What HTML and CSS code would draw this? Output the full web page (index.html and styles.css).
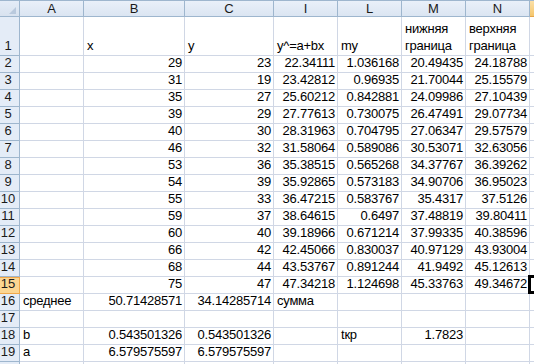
FILE: index.html
```html
<!DOCTYPE html>
<html>
<head>
<meta charset="utf-8">
<link rel="stylesheet" href="styles.css">
</head>
<body>
<div class="sheet">
  <div class="ch corner"><span class="tri"></span></div>
  <div class="ch">A</div><div class="ch">B</div><div class="ch">C</div><div class="ch">I</div><div class="ch">L</div><div class="ch">M</div><div class="ch">N</div><div class="ch sel-col"></div>

  <div class="rh">1</div>
  <div class="c"></div><div class="c">x</div><div class="c">y</div><div class="c">y^=a+bx</div><div class="c">my</div><div class="c wrap">нижняя граница</div><div class="c wrap">верхняя граница</div><div class="c"></div>

  <div class="rh">2</div>
  <div class="c"></div><div class="c n">29</div><div class="c n">23</div><div class="c n">22.34111</div><div class="c n">1.036168</div><div class="c n">20.49435</div><div class="c n">24.18788</div><div class="c"></div>

  <div class="rh">3</div>
  <div class="c"></div><div class="c n">31</div><div class="c n">19</div><div class="c n">23.42812</div><div class="c n">0.96935</div><div class="c n">21.70044</div><div class="c n">25.15579</div><div class="c"></div>

  <div class="rh">4</div>
  <div class="c"></div><div class="c n">35</div><div class="c n">27</div><div class="c n">25.60212</div><div class="c n">0.842881</div><div class="c n">24.09986</div><div class="c n">27.10439</div><div class="c"></div>

  <div class="rh">5</div>
  <div class="c"></div><div class="c n">39</div><div class="c n">29</div><div class="c n">27.77613</div><div class="c n">0.730075</div><div class="c n">26.47491</div><div class="c n">29.07734</div><div class="c"></div>

  <div class="rh">6</div>
  <div class="c"></div><div class="c n">40</div><div class="c n">30</div><div class="c n">28.31963</div><div class="c n">0.704795</div><div class="c n">27.06347</div><div class="c n">29.57579</div><div class="c"></div>

  <div class="rh">7</div>
  <div class="c"></div><div class="c n">46</div><div class="c n">32</div><div class="c n">31.58064</div><div class="c n">0.589086</div><div class="c n">30.53071</div><div class="c n">32.63056</div><div class="c"></div>

  <div class="rh">8</div>
  <div class="c"></div><div class="c n">53</div><div class="c n">36</div><div class="c n">35.38515</div><div class="c n">0.565268</div><div class="c n">34.37767</div><div class="c n">36.39262</div><div class="c"></div>

  <div class="rh">9</div>
  <div class="c"></div><div class="c n">54</div><div class="c n">39</div><div class="c n">35.92865</div><div class="c n">0.573183</div><div class="c n">34.90706</div><div class="c n">36.95023</div><div class="c"></div>

  <div class="rh">10</div>
  <div class="c"></div><div class="c n">55</div><div class="c n">33</div><div class="c n">36.47215</div><div class="c n">0.583767</div><div class="c n">35.4317</div><div class="c n">37.5126</div><div class="c"></div>

  <div class="rh">11</div>
  <div class="c"></div><div class="c n">59</div><div class="c n">37</div><div class="c n">38.64615</div><div class="c n">0.6497</div><div class="c n">37.48819</div><div class="c n">39.80411</div><div class="c"></div>

  <div class="rh">12</div>
  <div class="c"></div><div class="c n">60</div><div class="c n">40</div><div class="c n">39.18966</div><div class="c n">0.671214</div><div class="c n">37.99335</div><div class="c n">40.38596</div><div class="c"></div>

  <div class="rh">13</div>
  <div class="c"></div><div class="c n">66</div><div class="c n">42</div><div class="c n">42.45066</div><div class="c n">0.830037</div><div class="c n">40.97129</div><div class="c n">43.93004</div><div class="c"></div>

  <div class="rh">14</div>
  <div class="c"></div><div class="c n">68</div><div class="c n">44</div><div class="c n">43.53767</div><div class="c n">0.891244</div><div class="c n">41.9492</div><div class="c n">45.12613</div><div class="c"></div>

  <div class="rh sel-row">15</div>
  <div class="c"></div><div class="c n">75</div><div class="c n">47</div><div class="c n">47.34218</div><div class="c n">1.124698</div><div class="c n">45.33763</div><div class="c n">49.34672</div><div class="c"></div>

  <div class="rh">16</div>
  <div class="c">среднее</div><div class="c n">50.71428571</div><div class="c n">34.14285714</div><div class="c">сумма</div><div class="c"></div><div class="c"></div><div class="c"></div><div class="c"></div>

  <div class="rh">17</div>
  <div class="c"></div><div class="c"></div><div class="c"></div><div class="c"></div><div class="c"></div><div class="c"></div><div class="c"></div><div class="c"></div>

  <div class="rh">18</div>
  <div class="c">b</div><div class="c n">0.543501326</div><div class="c n">0.543501326</div><div class="c"></div><div class="c">tкр</div><div class="c n">1.7823</div><div class="c"></div><div class="c"></div>

  <div class="rh">19</div>
  <div class="c">a</div><div class="c n">6.579575597</div><div class="c n">6.579575597</div><div class="c"></div><div class="c"></div><div class="c"></div><div class="c"></div><div class="c"></div>

  <div class="rh"></div>
  <div class="c"></div><div class="c"></div><div class="c"></div><div class="c"></div><div class="c"></div><div class="c"></div><div class="c"></div><div class="c"></div>

  <div class="cursor"></div>
</div>
</body>
</html>
```

FILE: styles.css
```css
html, body {
  margin: 0;
  padding: 0;
  background: #fff;
}
body {
  width: 534px;
  height: 364px;
  overflow: hidden;
}
.sheet {
  position: relative;
  display: grid;
  grid-template-columns: 20px 64px 101px 89px 64px 64px 64px 64px 1fr;
  grid-template-rows: 17px 39px repeat(19, 17px);
  font-family: "Liberation Sans", Arial, sans-serif;
  font-size: 13px;
  letter-spacing: -0.23px;
  color: #000;
}
.ch {
  box-sizing: border-box;
  border-right: 1px solid #9eb6ce;
  border-bottom: 1px solid #9eb6ce;
  border-top: 1px solid #9eb6ce;
  background: linear-gradient(#e9f0f9, #dbe5f2);
  text-align: center;
  line-height: 15px;
  color: #1a1a1a;
  letter-spacing: 0;
}
.corner {
  position: relative;
  background: linear-gradient(#e4ecf7, #d8e2ef);
}
.tri {
  position: absolute;
  right: 3px;
  bottom: 2px;
  width: 0;
  height: 0;
  border-left: 7px solid transparent;
  border-bottom: 7px solid #b9c9dd;
}
.sel-col {
  border-right: none;
  background: linear-gradient(#fbe0a8, #f5c66c);
  border-bottom-color: #e3a44a;
}
.rh {
  box-sizing: border-box;
  border-right: 1px solid #9eb6ce;
  border-bottom: 1px solid #9eb6ce;
  background: #e4ecf7;
  color: #1a1a1a;
  display: flex;
  align-items: flex-end;
  padding: 0 4px 2px 1px;
  line-height: 15px;
  justify-content: center;
  letter-spacing: 0;
}
.sel-row {
  background: #fcd692;
  border-bottom-color: #f0a84a;
  border-right-color: #f0a84a;
  box-shadow: inset 0 1px 0 #f0a84a;
}
.c {
  box-sizing: border-box;
  border-right: 1px solid #d0d7e5;
  border-bottom: 1px solid #d0d7e5;
  display: flex;
  align-items: flex-end;
  padding: 0 2px 2px 3px;
  line-height: 15px;
  white-space: nowrap;
  overflow: visible;
}
.c.n {
  justify-content: flex-end;
}
.c.wrap {
  white-space: normal;
  line-height: 17px;
  padding-bottom: 1px;
}
.cursor {
  position: absolute;
  left: 528px;
  top: 275px;
  width: 12px;
  height: 19px;
  box-sizing: border-box;
  border: 3px solid #000;
  border-right: none;
}
```
